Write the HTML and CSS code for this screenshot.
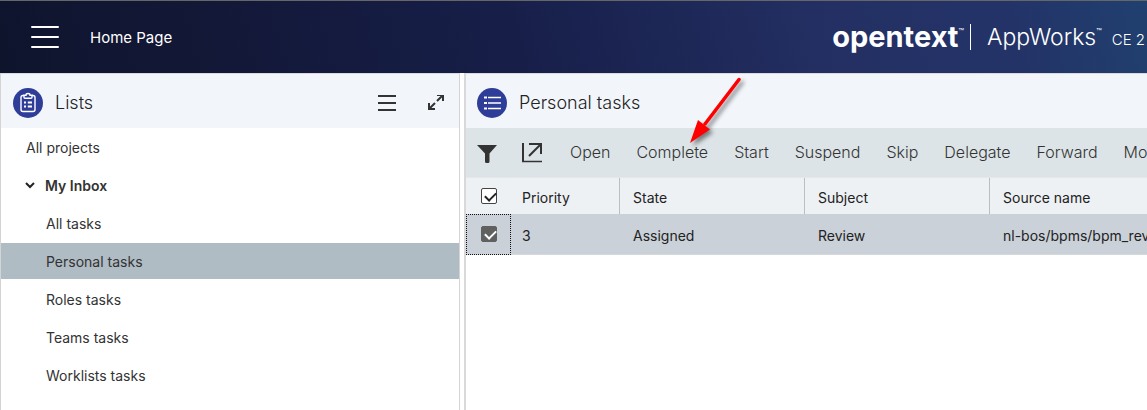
FILE: index.html
```html
<!DOCTYPE html>
<html lang="en">
<head>
<meta charset="utf-8">
<title>Home Page</title>
<link rel="stylesheet" href="styles.css">
</head>
<body>
<header class="topbar">
  <button class="icon-btn menu-btn" aria-label="Menu">
    <svg width="28" height="24" viewBox="0 0 28 24" fill="none" stroke="#fff" stroke-width="2" stroke-linecap="round"><path d="M1 2H27M1 12H27M1 22H27"/></svg>
  </button>
  <span class="page-name">Home Page</span>
  <div class="brand">
    <span class="brand-name">opentext</span><span class="tm">™</span>
    <span class="brand-rule"></span>
    <span class="product">AppWorks</span><span class="tm">™</span>
    <span class="version">CE 2</span>
  </div>
</header>
<div class="workspace">
  <nav class="panel lists" aria-label="Lists">
    <div class="panel-head">
      <svg class="badge" width="30" height="30" viewBox="0 0 30 30" fill="none"><circle cx="15" cy="15" r="15" fill="#2e3d98"/><g stroke="#fff" stroke-width="1.4"><path d="M11 7.5H10A2 2 0 0 0 8 9.500V21.500A2 2 0 0 0 10 23.500H20A2 2 0 0 0 22 21.500V9.500A2 2 0 0 0 20 7.500H19" /><path d="M11 7.200H13C13 5 17 5 17 7.200H19V9.200A1 1 0 0 1 18 10.200H12A1 1 0 0 1 11 9.200Z"/><path d="M11 14.500H13M14.800 14.500H19M11 18.500H13M14.800 18.500H19" stroke-width="1.800"/></g></svg>
      <h2>Lists</h2>
      <button class="icon-btn list-menu" aria-label="List menu"><svg width="18" height="17" viewBox="0 0 18 17" stroke="#333" stroke-width="2"><path d="M0 1H18M0 8H18M0 15H18"/></svg></button>
      <button class="icon-btn" aria-label="Expand"><svg width="16" height="16" viewBox="0 0 16 16" fill="none" stroke="#333" stroke-width="2"><path d="M9 1H15V7M15 1L9 7M7 15H1V9M1 15L7 9" transform="translate(0 -1)"/></svg></button>
    </div>
    <ul class="tree">
      <li><a href="#">All projects</a></li>
      <li><a href="#" class="group"><svg width="10" height="7" viewBox="0 0 10 7" fill="none" stroke="#222" stroke-width="2"><path d="M1 1L5 5L9 1"/></svg>My Inbox</a></li>
      <li><a href="#" class="child">All tasks</a></li>
      <li><a href="#" class="child selected" aria-current="page">Personal tasks</a></li>
      <li><a href="#" class="child">Roles tasks</a></li>
      <li><a href="#" class="child">Teams tasks</a></li>
      <li><a href="#" class="child">Worklists tasks</a></li>
    </ul>
  </nav>
  <main class="panel tasks">
    <div class="panel-head">
      <svg class="badge" width="30" height="30" viewBox="0 0 30 30"><circle cx="15" cy="15" r="15" fill="#2e3d98"/><g stroke="#fff"><path d="M7 9.500H10M7 15H10M7 20.500H10" stroke-width="2"/><path d="M11 9.500H24M11 15H24M11 20.500H24" stroke-width="1.500"/></g></svg>
      <h2>Personal tasks</h2>
    </div>
    <div class="toolbar">
      <button class="icon-btn filter" aria-label="Filter"><svg width="20" height="18" viewBox="0 0 20 18" fill="#333"><path d="M0 0H20L12.500 8.500V16.500Q12.500 18 11 18H9.500Q8 18 8 16.500V8.500Z"/></svg></button>
      <button class="icon-btn popout" aria-label="Open in new window"><svg width="20" height="20" viewBox="0 0 20 20" fill="none" stroke="#333" stroke-width="2"><path d="M1 0V19M7 1H19V11M19 1L7 13"/><path d="M0 18.500H20" stroke-width="1.500"/></svg></button>
      <button>Open</button><button>Complete</button><button>Start</button><button>Suspend</button><button>Skip</button><button>Delegate</button><button>Forward</button><button>More</button>
    </div>
    <table class="grid">
      <thead><tr>
        <th class="check"><input type="checkbox" checked aria-label="Select all tasks"></th>
        <th class="priority">Priority</th><th class="state">State</th><th class="subject">Subject</th><th class="source">Source name</th>
      </tr></thead>
      <tbody><tr>
        <td class="check"><input type="checkbox" checked aria-label="Select Review"></td>
        <td class="priority">3</td><td>Assigned</td><td>Review</td><td>nl-bos/bpms/bpm_review</td>
      </tr></tbody>
    </table>
    <svg class="pointer" width="60" height="74" viewBox="0 0 60 74"><path d="M49 9.500L15 54" stroke="#f00" stroke-width="3.500" stroke-linecap="round"/><path d="M0 73L8 50L20 59.500Z" fill="#f00"/></svg>
  </main>
</div>
</body>
</html>
```
FILE: styles.css
```css
* { box-sizing: border-box; }
body {
  margin: 0;
  min-height: 100vh;
  display: flex;
  flex-direction: column;
  overflow: hidden;
  font-family: Inter, "Liberation Sans", sans-serif;
  font-size: 14px;
  font-weight: 400;
  color: #333;
  background: #fff;
}
button {
  padding: 0;
  border: 0;
  background: none;
  font: inherit;
  color: inherit;
}
svg { display: block; flex: none; }
.topbar {
  height: 73px;
  display: flex;
  align-items: center;
  padding: 0 2px 0 31px;
  border-top: 1px solid #666;
  background: linear-gradient(75deg, #0f142d 0%, #131838 20%, #171f49 45%, #243064 73%, #233368 88%, #20406f 100%);
  color: #fff;
  white-space: nowrap;
}
.page-name { margin-left: 31px; font-size: 15px; }
.brand { margin-left: auto; display: flex; align-items: center; }
.brand-name { padding-bottom: 2px; font-size: 29px; font-weight: 700; }
.tm { align-self: flex-start; padding-top: 8px; font-size: 9px; line-height: 9px; }
.brand-rule { width: 1px; height: 26px; margin: 0 16px 0 6px; background: #fff; }
.product { font-size: 23px; font-weight: 300; }
.version { margin: 4px 0 0 10px; font-size: 15px; font-weight: 300; }
.workspace {
  flex: 1;
  display: grid;
  grid-template-columns: 460px minmax(0, 1fr);
  gap: 4px;
}
.panel { border-top: 1px solid #d8dade; }
.lists { border-left: 1px solid #d4d4d4; border-right: 1px solid #d4d4d4; }
.tasks { position: relative; overflow: hidden; border-left: 2px solid #d9d9d9; }
.panel-head {
  height: 54px;
  display: flex;
  align-items: center;
  padding: 4px 15px 0 12px;
  background: #f2f6fb;
}
.tasks .panel-head, .tasks .toolbar { padding-left: 11px; }
h2 { margin: 0 auto 0 12px; padding-bottom: 2px; font-size: 18px; font-weight: 300; color: #222; }
.list-menu { margin-right: 32px; }
.tree {
  margin: 0;
  padding: 1px 0;
  display: grid;
  gap: 2px;
  list-style: none;
}
.tree a {
  height: 36px;
  display: flex;
  align-items: center;
  padding-left: 25px;
  color: inherit;
  text-decoration: none;
}
.tree .group { gap: 10px; padding-left: 24px; font-weight: 600; }
.tree .child { padding-left: 45px; }
.tree .selected { background: #afbcc4; }
.toolbar {
  height: 50px;
  display: flex;
  align-items: center;
  gap: 26px;
  border-bottom: 1px solid #e4e8ea;
  background: #dce4e7;
  font-size: 16px;
  font-weight: 300;
}
.toolbar button { padding-bottom: 2px; }
.toolbar .filter { padding: 2px 0 0; }
.toolbar .popout { margin: 0 2px 0 -1px; padding: 0; }
.grid {
  width: 100%;
  table-layout: fixed;
  border-collapse: separate;
  border-spacing: 0;
  color: #222;
}
th, td { padding: 0 13px; text-align: left; font-weight: 400; white-space: nowrap; }
th { height: 36px; padding-top: 2px; background: #edf1f4; border-right: 1px solid #b9bec2; }
td { height: 41px; padding-top: 2px; background: #cad1d8; border-bottom: 1px solid #d5d9dc; }
.grid .check { width: 45px; padding: 0 15px; }
th.check { border-right: 0; }
td.check { outline: 1px dotted #111; outline-offset: -1px; }
th.priority { width: 109px; }
.grid .priority { padding-left: 11px; }
th.state, th.subject { width: 185px; }
th.source { border-right: 0; }
input {
  appearance: none;
  display: block;
  width: 16px;
  height: 16px;
  margin: 0;
  border: 1px solid #444;
  border-radius: 2px;
  background: #fff;
}
input::after {
  content: "";
  display: block;
  width: 9px;
  height: 5px;
  margin: 3px 0 0 3px;
  border: solid #222;
  border-width: 0 0 2px 2px;
  rotate: -45deg;
}
td input { background: #606060; border-color: #606060; }
td input::after { border-color: #fff; }
.pointer {
  position: absolute;
  left: 224px;
  top: -4px;
  overflow: visible;
  filter: drop-shadow(3px 3px 2px #0007);
  pointer-events: none;
}
```
